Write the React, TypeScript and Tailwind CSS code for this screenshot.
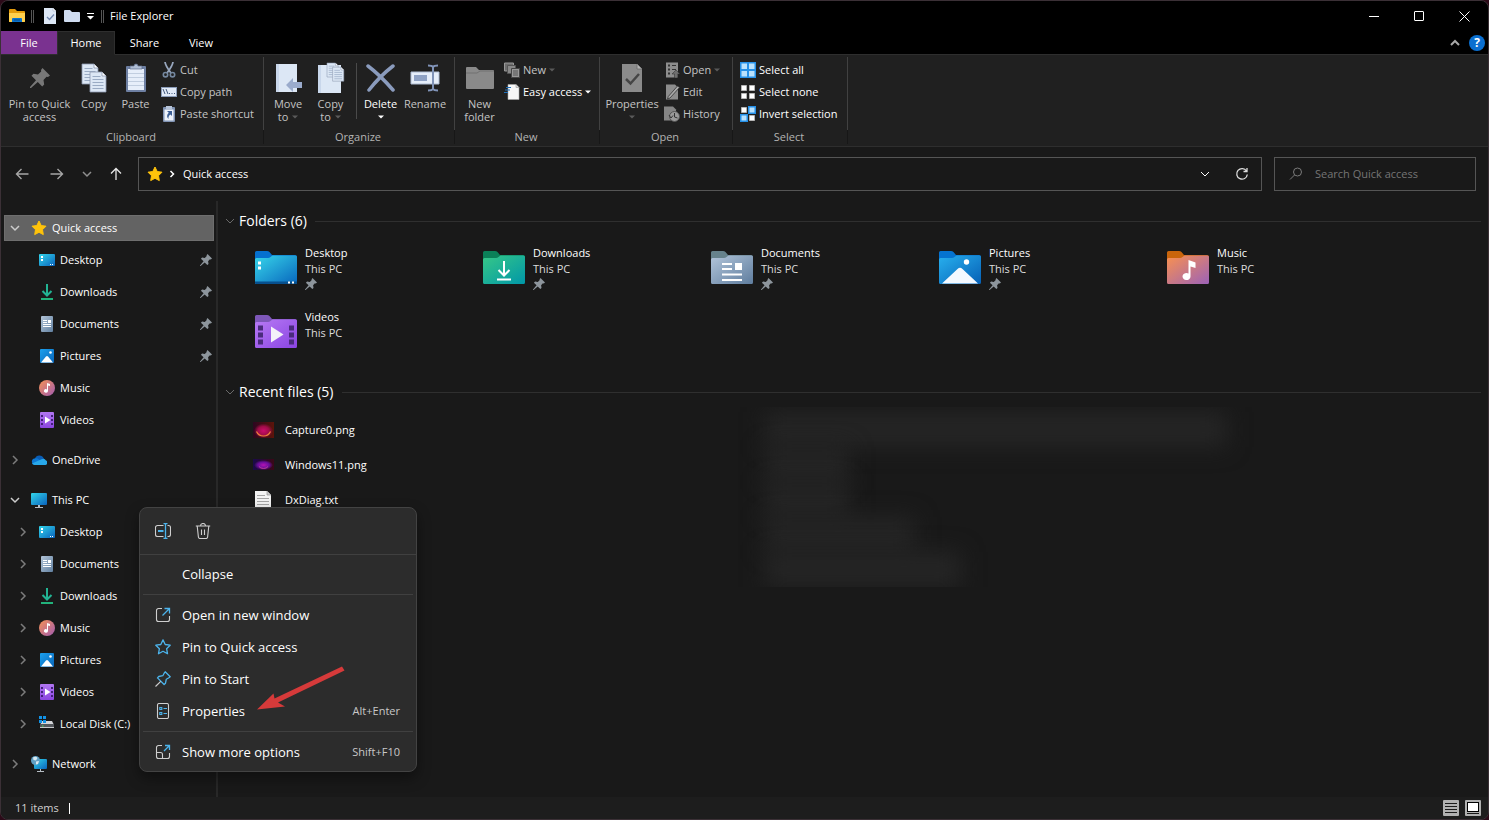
import React from 'react';

type IconProps = { className?: string };

/* ---------- small glyphs ---------- */

function Caret({ className = 'text-[#5a5a5a]' }: IconProps) {
  return (
    <svg className={`w-[6px] h-[4px] shrink-0 ${className}`} viewBox="0 0 6 4" fill="currentColor">
      <path d="M0 .5h6L3 3.500z" />
    </svg>
  );
}

function Chevron({ dir, className = '' }: { dir: 'down' | 'right' | 'up'; className?: string }) {
  const d = { down: 'M2 4l4 4 4-4', right: 'M4 2l4 4-4 4', up: 'M2 8l4-4 4 4' }[dir];
  return (
    <svg className={`w-[12px] h-[12px] shrink-0 ${className}`} viewBox="0 0 12 12" fill="none" stroke="currentColor">
      <path d={d} />
    </svg>
  );
}

function PinGlyph({ className = 'w-[12px] h-[12px] text-[#8d959c]' }: IconProps) {
  return (
    <svg className={`shrink-0 ${className}`} viewBox="0 0 20 20" fill="currentColor">
      <path d="M12.500 0L20 7.500l-2 1.500-1.500-.2-3 3.200.7 4.500-2 2L7.800 14 1 20H0v-1l6-6.800L1.500 7.800l2-2 4.500.7 3.200-3L11 2z" />
    </svg>
  );
}

function Star({ className = 'w-[16px] h-[16px]' }: IconProps) {
  return (
    <svg className={`shrink-0 ${className}`} viewBox="0 0 16 16">
      <path d="M8 1l2.200 4.500 4.800.7-3.500 3.500.8 4.900L8 12.300l-4.300 2.300.8-4.900L1 6.200l4.800-.7z" fill="#ffc30b" stroke="#ffc30b" strokeLinejoin="round" />
    </svg>
  );
}

/* ---------- tree icons (16px) ---------- */

function SmallIcon({ name }: { name: string }) {
  const cls = 'w-[16px] h-[16px] shrink-0';
  switch (name) {
    case 'star':
      return <Star />;
    case 'desktop':
      return (
        <svg className={cls} viewBox="0 0 16 16">
          <defs>
            <linearGradient id="sDesk" x1="0" y1="0" x2="1" y2="1">
              <stop offset="0" stopColor="#32d5ea" />
              <stop offset="1" stopColor="#0a63bd" />
            </linearGradient>
          </defs>
          <rect y="2" width="16" height="12" rx="1" fill="url(#sDesk)" />
          <path d="M2 4h2v2H2zM2 7h2v2H2zM11 12h1v1h-1zM13 12h1v1h-1z" fill="#fff" />
        </svg>
      );
    case 'downloads':
      return (
        <svg className={cls} viewBox="0 0 16 16" fill="none" strokeWidth="2">
          <path d="M8 0v11M3.500 7L8 11.500 12.500 7" stroke="#22b393" />
          <path d="M2 15h12" stroke="#22b27b" />
        </svg>
      );
    case 'documents':
      return (
        <svg className={cls} viewBox="0 0 16 16">
          <defs>
            <linearGradient id="sDoc" x1="0" y1="0" x2="1" y2="1">
              <stop offset="0" stopColor="#b3c5d8" />
              <stop offset="1" stopColor="#6180a0" />
            </linearGradient>
          </defs>
          <rect x="2" width="12" height="16" rx="1" fill="url(#sDoc)" />
          <path d="M4 4h4v1H4zM4 6h4v1H4zM9 4h3v3H9zM4 8h8v1H4zM4 10h8v1H4z" fill="#fff" />
        </svg>
      );
    case 'pictures':
      return (
        <svg className={cls} viewBox="0 0 16 16">
          <defs>
            <linearGradient id="sPic" x1="0" y1="0" x2="1" y2="1">
              <stop offset="0" stopColor="#1ba0ee" />
              <stop offset="1" stopColor="#0865b9" />
            </linearGradient>
          </defs>
          <rect x="1" y="1" width="14" height="14" rx="1" fill="url(#sPic)" />
          <path d="M2 14.500L7 8.500q1-1 2 0l5 6z" fill="#fff" />
          <circle cx="11.500" cy="4.500" r="1.300" fill="#fff" />
        </svg>
      );
    case 'music':
      return (
        <svg className={cls} viewBox="0 0 16 16">
          <defs>
            <linearGradient id="sMus" x1="0" y1="0" x2="1" y2="1">
              <stop offset="0" stopColor="#f69254" />
              <stop offset="1" stopColor="#a15bb0" />
            </linearGradient>
          </defs>
          <circle cx="8" cy="8" r="8" fill="url(#sMus)" />
          <path d="M8 3l3 1v2L9 5.500V11a2 1.800 0 1 1-1-1.600z" fill="#fff" />
        </svg>
      );
    case 'videos':
      return (
        <svg className={cls} viewBox="0 0 16 16">
          <defs>
            <linearGradient id="sVid" x1="0" y1="0" x2="0" y2="1">
              <stop offset="0" stopColor="#b176f2" />
              <stop offset="1" stopColor="#8b45e0" />
            </linearGradient>
          </defs>
          <rect x="1" width="14" height="16" rx="1" fill="url(#sVid)" />
          <path d="M2 3h2v2H2zM2 7h2v2H2zM2 11h2v2H2zM12 3h2v2h-2zM12 7h2v2h-2zM12 11h2v2h-2z" fill="#43217a" />
          <path d="M6 4.500v7L11.500 8z" fill="#fff" />
        </svg>
      );
    case 'onedrive':
      return (
        <svg className={cls} viewBox="0 0 16 16">
          <path d="M4 6.500a4.600 4.600 0 0 1 8.600-.2L15 10 2 11z" fill="#0a5db5" />
          <path d="M3.500 6.500q2.500-.8 4.500.9L13 11l-9.500 1.800A3.200 3.200 0 0 1 3.500 6.500z" fill="#0d78d4" />
          <path d="M10.500 7.200a3.400 3.400 0 0 1 4.500 1.400 2.300 2.300 0 0 1-1.200 4.400H3.500a3 3 0 0 1-2.500-1.500z" fill="#28a8ea" />
        </svg>
      );
    case 'pc':
      return (
        <svg className={cls} viewBox="0 0 16 16">
          <rect y="1" width="16" height="12" rx="1" fill="url(#sDesk)" />
          <path d="M7 13h2v2h3v1H4v-1h3z" fill="#b6bdc4" />
        </svg>
      );
    case 'disk':
      return (
        <svg className={cls} viewBox="0 0 16 16">
          <path d="M3 5h10l2 4H1z" fill="#d3d5d8" />
          <path d="M0 0h3v3H0zM4 0h3v3H4zM0 4h3v3H0zM4 4h3v3H4z" fill="#1192e6" />
          <rect x="1" y="8" width="14" height="4" fill="#55585c" />
          <path d="M1 11h14v1H1z" fill="#c8cacc" />
          <path d="M3 9.500h1.500V10.500H3z" fill="#4cd964" />
        </svg>
      );
    case 'network':
      return (
        <svg className={cls} viewBox="0 0 16 16">
          <rect x="3" y="3" width="13" height="10" rx="1" fill="url(#sDesk)" />
          <path d="M9 13h1v2h3v1H6v-1h3z" fill="#b6bdc4" />
          <circle cx="4.500" cy="4.500" r="4.500" fill="#5f9fc4" />
          <path d="M2 1.500Q5 0 6.500 2L5 4.500 2.500 4zM5 5.500l3-.5-1 3-2 .5z" fill="#d7eaf3" />
        </svg>
      );
    default:
      return null;
  }
}

/* ---------- 42px library folders ---------- */

const folderColors: Record<string, [string, string, string]> = {
  desktop: ['#0570cf', '#38d6ea', '#0866bd'],
  downloads: ['#0b8058', '#37c887', '#0097a8'],
  documents: ['#66828c', '#b2c5da', '#5f7d9e'],
  pictures: ['#0573d0', '#28b0ee', '#0660b6'],
  music: ['#c9650c', '#f9914f', '#9c62b8'],
  videos: ['#7d57b8', '#b77af4', '#8a44e2'],
};

function FolderIcon({ name }: { name: string }) {
  const [back, from, to] = folderColors[name];
  const id = `folder-${name}`;
  return (
    <svg className="w-[42px] h-[34px] shrink-0" viewBox="0 0 42 34">
      <defs>
        <linearGradient id={id} x1="0" y1="0" x2="1" y2="1">
          <stop offset="0" stopColor={from} />
          <stop offset="1" stopColor={to} />
        </linearGradient>
      </defs>
      <path d="M0 1.500Q0 0 1.500 0H12q1.500 0 2.500 1L17 4H40q2 0 2 2V15H0z" fill={back} />
      <path d="M0 8.500q0-1.500 1.500-1.500H13q1.500 0 2.500-1l2-1.500H40.500q1.500 0 1.500 1.500v25.500q0 1.500-1.500 1.500h-39Q0 33 0 31.500z" fill={`url(#${id})`} />
      {name === 'desktop' && (
        <>
          <path d="M0 30.500h42V31.500q0 1.500-1.500 1.500h-39Q0 33 0 31.500z" fill="#07508e" />
          <path d="M3 10.500h3v3H3zM3 15.500h3v3H3zM33 30.500h2V32.500h-2zM37 30.500h2V32.500h-2z" fill="#fff" />
        </>
      )}
      {name === 'downloads' && (
        <path d="M21 10v14M15.500 19l5.500 5.500 5.500-5.500M14 28.500h14" stroke="#fff" strokeWidth="2" fill="none" />
      )}
      {name === 'documents' && (
        <path d="M11 12h10v2H11zM11 17h10v2H11zM24 12h7v7h-7zM11 22.500h20v2H11zM11 28h20v2H11z" fill="#fff" />
      )}
      {name === 'pictures' && (
        <>
          <path d="M3 32.500L18.500 18q2.500-2.500 5 0L39 32.500z" fill="#f4f9ff" />
          <circle cx="27.500" cy="11" r="2.700" fill="#fff" />
        </>
      )}
      {name === 'music' && (
        <path d="M21.500 9l7 2.500v5.500l-5-1.500V25.500a4 3.500 0 1 1-2-3z" fill="#fff" />
      )}
      {name === 'videos' && (
        <>
          <path d="M3 10.500h5v5H3zM3 17.500h5v5H3zM3 24.500h5v5H3zM34 10.500h5v5h-5zM34 17.500h5v5h-5zM34 24.500h5v5h-5z" fill="#4a2b7c" />
          <path d="M16 11.500v16L28.500 19.500z" fill="#f4f1f9" />
        </>
      )}
    </svg>
  );
}

/* ---------- ribbon icons ---------- */

const pale = '#dce7f5';
const slate = '#8a9bbd';

function PageShape({ x, y, line = '#9aabc4' }: { x: number; y: number; line?: string }) {
  return (
    <g transform={`translate(${x} ${y})`}>
      <path d="M0 0h12l4 4v16H0z" fill={pale} stroke="#8d9bb0" strokeWidth=".8" />
      <path d="M12 0v4h4" fill="#fff" stroke="#8d9bb0" strokeWidth=".8" />
      <path d="M2.500 4.500h8M2.500 7.500h11M2.500 10.500h11M2.500 13.500h11M2.500 16.500h11" stroke={line} />
    </g>
  );
}

function LargeIcon({ name }: { name: string }) {
  switch (name) {
    case 'pin':
      return <PinGlyph className="w-[20px] h-[20px] text-[#777777]" />;
    case 'copy':
      return (
        <svg width="26" height="30" viewBox="0 0 26 30">
          <PageShape x={1} y={1} />
          <PageShape x={9} y={9} />
        </svg>
      );
    case 'paste':
      return (
        <svg width="22" height="30" viewBox="0 0 22 30">
          <rect x="1" y="3" width="20" height="26" rx="1" fill="#6e80a3" />
          <path d="M3 6h16v21H3z" fill="#e6eefa" />
          <path d="M3 10.500h16M3 14.500h16M3 18.500h16M3 22.500h16" stroke="#c1cee0" />
          <path d="M5 3h4a2 2 0 0 1 4 0h4v3H5z" fill="#aebcd3" stroke="#5c6c8b" strokeWidth=".7" />
        </svg>
      );
    case 'move':
      return (
        <svg width="28" height="30" viewBox="0 0 28 30">
          <path d="M2 1h21v28H2z" fill={pale} />
          <path d="M2 1h3v28H2z" fill="#c9d7eb" />
          <path d="M12 22l7-7v4h9v6h-9v4z" fill="#9aabcc" />
        </svg>
      );
    case 'copyto':
      return (
        <svg width="28" height="32" viewBox="0 0 28 32">
          <path d="M1 3h23v28H1z" fill={pale} />
          <path d="M1 3h3v28H1z" fill="#c9d7eb" />
          <g transform="translate(10 1) scale(.7)">
            <PageShape x={0} y={0} />
            <PageShape x={8} y={6} />
          </g>
        </svg>
      );
    case 'delete':
      return (
        <svg width="30" height="30" viewBox="0 0 30 30" fill="none">
          <path d="M2 3Q14 12 27 27M27 3Q14 13 3 27" stroke={slate} strokeWidth="3.500" strokeLinecap="round" />
        </svg>
      );
    case 'rename':
      return (
        <svg width="30" height="28" viewBox="0 0 30 28">
          <path d="M1 8h28v12H1z" fill="#e6eefa" stroke="#aebcd3" />
          <path d="M4 11h13v6H4z" fill="#8fa2c5" />
          <path d="M18 1.500q4 0 5 1.500 1-1.500 5-1.500M18 26.500q4 0 5-1.500 1 1.500 5 1.500M23 3v22" stroke="#8093b8" strokeWidth="2" fill="none" />
        </svg>
      );
    case 'newfolder':
      return (
        <svg width="30" height="24" viewBox="0 0 30 24">
          <path d="M1 2q0-1 1-1h9l3 3h14q1 0 1 1v17q0 1-1 1H2q-1 0-1-1z" fill="#8a8a8a" />
          <path d="M1 7h11l3-2h14" stroke="#6b6b6b" fill="none" strokeWidth=".8" />
        </svg>
      );
    case 'properties':
      return (
        <svg width="22" height="30" viewBox="0 0 22 30">
          <path d="M1 1h15l5 5v23H1z" fill="#8b8b8b" />
          <path d="M16 1v5h5" fill="#b3b3b3" stroke="#6a6a6a" strokeWidth=".8" />
          <path d="M5 16l4.500 4.500L18 11" stroke="#454545" strokeWidth="2.500" fill="none" />
        </svg>
      );
    default:
      return null;
  }
}

function RibbonSmallIcon({ name }: { name: string }) {
  const cls = 'w-[16px] h-[16px] shrink-0';
  switch (name) {
    case 'cut':
      return (
        <svg className={cls} viewBox="0 0 16 16" fill="none">
          <path d="M4 0q.5 4 6 11M12 0q-.5 4-6 11" stroke="#97a6bd" strokeWidth="1.800" />
          <circle cx="4.500" cy="12.700" r="2.200" stroke="#75889f" strokeWidth="1.600" />
          <circle cx="11.500" cy="12.700" r="2.200" stroke="#75889f" strokeWidth="1.600" />
        </svg>
      );
    case 'copypath':
      return (
        <svg className={cls} viewBox="0 0 16 16">
          <rect x=".5" y="3.500" width="15" height="9" fill="#e1eaf7" stroke="#8c9dba" />
          <path d="M2 5l2 5M5 5l2 5" stroke="#44587a" fill="none" />
          <path d="M8 9h1v1H8zM10.500 9h1v1h-1zM13 9h1v1h-1z" fill="#44587a" />
        </svg>
      );
    case 'pasteshortcut':
      return (
        <svg className={cls} viewBox="0 0 16 16">
          <rect x="2" y="1" width="12" height="15" rx="1" fill="#8093b3" />
          <path d="M3.500 3.500h9v11h-9z" fill="#eef3fb" />
          <path d="M5 0h6v3H5z" fill="#b6c3d8" />
          <path d="M6 5h5v5L9.500 8.500Q7 10 7.500 13 4.500 10 7.800 6.800z" fill="#3e5f94" />
        </svg>
      );
    case 'new':
      return (
        <svg className={cls} viewBox="0 0 16 16">
          <path d="M.5 1h9v8h-9z" fill="#6d6d6d" stroke="#999" />
          <path d="M3.500 3.500h8v8h-8z" fill="#888" stroke="#555" />
          <path d="M7.500 6.500h8v9h-8z" fill="#999" stroke="#444" />
          <path d="M9 9h5M9 11h5M9 13h5" stroke="#555" />
        </svg>
      );
    case 'easyaccess':
      return (
        <svg className={cls} viewBox="0 0 16 16">
          <path d="M4 .5h8l3 3v12H4z" fill="#f7f7f7" stroke="#aaa" strokeWidth=".6" />
          <path d="M12 .5v3h3" fill="#ddd" stroke="#999" strokeWidth=".6" />
          <path d="M2 3.500h5M1 6h5M0 8.500h4" stroke="#1f6fb8" />
        </svg>
      );
    case 'open':
      return (
        <svg className={cls} viewBox="0 0 16 16">
          <path d="M2 .5h12v15H2z" fill="#8d8d8d" />
          <path d="M4 2.500h2v2H4zM4 6.500h2v2H4zM4 10.500h2v2H4z" fill="#333" />
          <path d="M8 3.500h4M8 7.500h4" stroke="#333" />
          <path d="M12 8l4 4h-2.500v4h-3v-4H8z" fill="#6f6f6f" stroke="#2b2b2b" strokeWidth=".5" />
        </svg>
      );
    case 'edit':
      return (
        <svg className={cls} viewBox="0 0 16 16">
          <path d="M2 .5h9l3 3v12H2z" fill="#8d8d8d" />
          <path d="M15.500 3.500L6 14l-2.500 1 .8-2.500L13.500 2z" fill="#aaa" stroke="#333" strokeWidth=".8" />
        </svg>
      );
    case 'history':
      return (
        <svg className={cls} viewBox="0 0 16 16">
          <path d="M0 .5h9l3 3v11H0z" fill="#858585" />
          <circle cx="10.500" cy="10.500" r="5" fill="#9a9a9a" stroke="#555" />
          <path d="M10.500 7v4l3 1M5 9l2 3 2-2.500" stroke="#333" fill="none" />
        </svg>
      );
    case 'selectall':
      return (
        <svg className={cls} viewBox="0 0 16 16">
          <path d="M0 0h16v16H0z" fill="#2590e8" />
          <path d="M1.500 1.500h5.500v5.500H1.500zM9 1.500h5.500v5.500H9zM1.500 9h5.500v5.500H1.500zM9 9h5.500v5.500H9z" fill="#b9e1fd" />
        </svg>
      );
    case 'selectnone':
      return (
        <svg className={cls} viewBox="0 0 16 16">
          <path d="M1.500 1.500h5v5h-5zM9.500 1.500h5v5h-5zM1.500 9.500h5v5h-5zM9.500 9.500h5v5h-5z" fill="#fff" stroke="#b5b5b5" />
        </svg>
      );
    case 'invert':
      return (
        <svg className={cls} viewBox="0 0 16 16">
          <path d="M1.500 1.500h5v5h-5zM9.500 9.500h5v5h-5z" fill="#fff" stroke="#b5b5b5" />
          <path d="M8 0h8v8H8zM0 8h8v8H0z" fill="#2590e8" />
          <path d="M9.500 1.500h5v5h-5zM1.500 9.500h5v5h-5z" fill="#b9e1fd" />
        </svg>
      );
    default:
      return null;
  }
}

/* ---------- ribbon pieces ---------- */

type LargeProps = {
  icon: string;
  lines: string[];
  width: string;
  active?: boolean;
  caret?: 'inline' | 'below';
};

function LargeButton({ icon, lines, width, active, caret }: LargeProps) {
  return (
    <button
      type="button"
      className={`flex flex-col items-center shrink-0 leading-[13px] whitespace-nowrap ${width} ${active ? 'text-white' : 'text-[#c4c4c4]'}`}
    >
      <span className="h-[38px] flex items-center justify-center">
        <LargeIcon name={icon} />
      </span>
      {lines.map((line, i) => (
        <span key={line} className="flex items-center gap-1">
          {line}
          {caret === 'inline' && i === lines.length - 1 && <Caret />}
        </span>
      ))}
      {caret === 'below' && (
        <span className="h-[13px] flex items-center">
          <Caret className={active ? 'text-white' : 'text-[#5a5a5a]'} />
        </span>
      )}
    </button>
  );
}

type SmallProps = { icon: string; label: string; active?: boolean; caret?: boolean };

function SmallButton({ icon, label, active, caret }: SmallProps) {
  return (
    <button
      type="button"
      className={`h-[22px] flex items-center gap-[3px] whitespace-nowrap ${active ? 'text-white' : 'text-[#c4c4c4]'}`}
    >
      <RibbonSmallIcon name={icon} />
      {label}
      {caret && <Caret className={active ? 'text-white' : 'text-[#5a5a5a]'} />}
    </button>
  );
}

function Group({ label, width, children }: { label: string; width: string; children: React.ReactNode }) {
  return (
    <section aria-label={label} className={`flex shrink-0 ${width}`}>
      <div className="flex-1 min-w-0 flex flex-col pt-1">
        <div className="h-[70px] flex">{children}</div>
        <div className="h-[16px] leading-[16px] pr-[2px] text-center text-[#b4b4b4]">{label}</div>
      </div>
      <div className="w-px my-[2px] bg-linear-to-b from-[#414141] from-84% to-[#171717] to-84%" />
    </section>
  );
}

function Ribbon() {
  return (
    <div className="flex bg-[#202020] border-b border-[#2e2e2e] h-[92px] overflow-hidden">
      <Group label="Clipboard" width="w-[263px]">
        <LargeButton icon="pin" lines={['Pin to Quick', 'access']} width="w-[77px]" />
        <LargeButton icon="copy" lines={['Copy']} width="w-[32px]" />
        <LargeButton icon="paste" lines={['Paste']} width="w-[51px]" />
        <div className="flex flex-col">
          <SmallButton icon="cut" label="Cut" />
          <SmallButton icon="copypath" label="Copy path" />
          <SmallButton icon="pasteshortcut" label="Paste shortcut" />
        </div>
      </Group>
      <Group label="Organize" width="w-[191px]">
        <LargeButton icon="move" lines={['Move', 'to']} width="w-[48px]" caret="inline" />
        <LargeButton icon="copyto" lines={['Copy', 'to']} width="w-[37px]" caret="inline" />
        <div className="w-px h-[56px] mt-1 ml-[7px] bg-[#4a4a4a]" />
        <LargeButton icon="delete" lines={['Delete']} width="w-[47px]" active caret="below" />
        <LargeButton icon="rename" lines={['Rename']} width="w-[42px]" />
      </Group>
      <Group label="New" width="w-[145px]">
        <LargeButton icon="newfolder" lines={['New', 'folder']} width="w-[49px]" />
        <div className="flex flex-col">
          <SmallButton icon="new" label="New" caret />
          <SmallButton icon="easyaccess" label="Easy access" active caret />
        </div>
      </Group>
      <Group label="Open" width="w-[133px]">
        <LargeButton icon="properties" lines={['Properties']} width="w-[64px]" caret="below" />
        <div className="flex flex-col">
          <SmallButton icon="open" label="Open" caret />
          <SmallButton icon="edit" label="Edit" />
          <SmallButton icon="history" label="History" />
        </div>
      </Group>
      <Group label="Select" width="w-[115px]">
        <div className="flex flex-col pl-[7px]">
          <SmallButton icon="selectall" label="Select all" active />
          <SmallButton icon="selectnone" label="Select none" active />
          <SmallButton icon="invert" label="Invert selection" active />
        </div>
      </Group>
    </div>
  );
}

/* ---------- title bar, tabs, address bar ---------- */

function TitleBar() {
  return (
    <header className="h-[30px] bg-black flex items-center text-white">
      <svg className="ml-[7px]" width="18" height="16" viewBox="0 0 18 16">
        <path d="M1 2q0-1 1-1h5l2 2h7q1 0 1 1v10H1z" fill="#e39b0b" />
        <path d="M1 5h16v8q0 1-1 1H2q-1 0-1-1z" fill="#ffd04d" />
        <path d="M4 14v-3q0-1 1-1h8q1 0 1 1v3z" fill="#0b73cc" />
        <path d="M6 12h6" stroke="#064a8c" />
      </svg>
      <span className="ml-[5px] w-[3px] h-[13px] border-x border-[#555555]" />
      <button type="button" aria-label="Properties" className="ml-[9px]">
        <svg width="14" height="16" viewBox="0 0 14 16">
          <path d="M1 0h9l3 3v13H1z" fill={pale} />
          <path d="M10 0v3h3" fill="#fff" stroke="#a9b6c9" strokeWidth=".6" />
          <path d="M4 9l2.500 2.500L11 6.500" stroke="#7288b0" strokeWidth="1.300" fill="none" />
        </svg>
      </button>
      <button type="button" aria-label="New folder" className="ml-[7px]">
        <svg width="16" height="14" viewBox="0 0 16 14">
          <path d="M0 2q0-1 1-1h5l2 2h7q1 0 1 1v8q0 1-1 1H1q-1 0-1-1z" fill="#cfdcf0" />
        </svg>
      </button>
      <button type="button" aria-label="Customize Quick Access Toolbar" className="ml-[6px]">
        <svg width="9" height="8" viewBox="0 0 9 8" fill="#fff">
          <path d="M1 1h7v1H1zM1 4h7L4.500 7.500z" />
        </svg>
      </button>
      <span className="ml-[6px] w-[3px] h-[13px] border-x border-[#555555]" />
      <h1 className="ml-[6px]">File Explorer</h1>
      <div className="ml-auto flex h-full">
        <button type="button" aria-label="Minimize" className="w-[45px] flex items-center justify-center">
          <svg width="10" height="10" viewBox="0 0 10 10" stroke="#fff"><path d="M0 5.500h10" /></svg>
        </button>
        <button type="button" aria-label="Maximize" className="w-[45px] flex items-center justify-center">
          <svg width="10" height="10" viewBox="0 0 10 10" stroke="#fff" fill="none"><rect x=".5" y=".5" width="9" height="9" rx=".5" /></svg>
        </button>
        <button type="button" aria-label="Close" className="w-[47px] flex items-center justify-center">
          <svg width="11" height="11" viewBox="0 0 11 11" stroke="#fff"><path d="M.5.5l10 10M10.500.5l-10 10" /></svg>
        </button>
      </div>
    </header>
  );
}

function Tabs() {
  return (
    <nav className="h-[24px] bg-black flex text-white">
      <button type="button" className="w-[56px] bg-[#7a3290] border-b border-[#2e2e2e]">File</button>
      <button type="button" className="w-[58px] bg-[#202020] border border-[#2e2e2e] border-b-[#202020]">Home</button>
      <button type="button" className="w-[59px] border-b border-[#2e2e2e]">Share</button>
      <button type="button" className="w-[54px] border-b border-[#2e2e2e]">View</button>
      <div className="flex-1 flex items-center justify-end gap-2 pr-[3px] border-b border-[#2e2e2e]">
        <button type="button" aria-label="Minimize the Ribbon">
          <Chevron dir="up" className="stroke-2 text-[#a8a8a8]" />
        </button>
        <button type="button" className="w-[16px] h-[16px] leading-[16px] rounded-full bg-[#0a6fd0] font-bold text-xs">?</button>
      </div>
    </nav>
  );
}

function AddressRow() {
  return (
    <div className="h-[54px] flex items-center pl-[14px] pr-3">
      <button type="button" aria-label="Back" className="text-[#a6a6a6]">
        <svg width="14" height="12" viewBox="0 0 14 12" fill="none" stroke="currentColor" strokeWidth="1.400"><path d="M13.500 6H1.500M6.500 1l-5 5 5 5" /></svg>
      </button>
      <button type="button" aria-label="Forward" className="ml-[21px] text-[#a6a6a6]">
        <svg width="14" height="12" viewBox="0 0 14 12" fill="none" stroke="currentColor" strokeWidth="1.400"><path d="M.5 6h12M7.500 1l5 5-5 5" /></svg>
      </button>
      <button type="button" aria-label="Recent locations" className="ml-[17px] text-[#8f8f8f]">
        <Chevron dir="down" className="stroke-[1.500]" />
      </button>
      <button type="button" aria-label="Up" className="ml-[17px] text-[#e6e6e6]">
        <svg width="12" height="14" viewBox="0 0 12 14" fill="none" stroke="currentColor" strokeWidth="1.300"><path d="M6 13V1.500M1 6.500l5-5 5 5" /></svg>
      </button>
      <div className="ml-4 flex-1 h-[34px] border border-[#555555] flex items-center pl-2 pr-3 text-white">
        <Star />
        <svg className="ml-[6px] mr-2" width="6" height="8" viewBox="0 0 6 8" fill="none" stroke="currentColor" strokeWidth="1.500">
          <path d="M1.500 1l3 3-3 3" />
        </svg>
        <button type="button">Quick access</button>
        <button type="button" aria-label="Previous locations" className="ml-auto">
          <Chevron dir="down" />
        </button>
        <button type="button" aria-label="Refresh" className="ml-6">
          <svg width="14" height="14" viewBox="0 0 14 14" fill="none" stroke="#dddddd" strokeWidth="1.300">
            <path d="M11.500 4A5.300 5.300 0 1 0 12.300 7.500M12 1v3.500H8.500" />
          </svg>
        </button>
      </div>
      <label className="ml-3 w-[202px] h-[34px] border border-[#555555] flex items-center pl-[14px] gap-3">
        <svg className="shrink-0" width="14" height="14" viewBox="0 0 14 14" fill="none" stroke="#7a7a7a">
          <circle cx="8.500" cy="5" r="4" />
          <path d="M5.500 8L1 12.500" />
        </svg>
        <input
          type="text"
          aria-label="Search Quick access"
          placeholder="Search Quick access"
          className="w-full bg-transparent outline-none text-white placeholder:text-[#757575]"
        />
      </label>
    </div>
  );
}

/* ---------- navigation tree ---------- */

type TreeItem = {
  label: string;
  icon: string;
  level: 0 | 1;
  chevron?: 'down' | 'right';
  pinned?: boolean;
  selected?: boolean;
};

const tree: TreeItem[][] = [
  [
    { label: 'Quick access', icon: 'star', level: 0, chevron: 'down', selected: true },
    { label: 'Desktop', icon: 'desktop', level: 1, pinned: true },
    { label: 'Downloads', icon: 'downloads', level: 1, pinned: true },
    { label: 'Documents', icon: 'documents', level: 1, pinned: true },
    { label: 'Pictures', icon: 'pictures', level: 1, pinned: true },
    { label: 'Music', icon: 'music', level: 1 },
    { label: 'Videos', icon: 'videos', level: 1 },
  ],
  [{ label: 'OneDrive', icon: 'onedrive', level: 0, chevron: 'right' }],
  [
    { label: 'This PC', icon: 'pc', level: 0, chevron: 'down' },
    { label: 'Desktop', icon: 'desktop', level: 1, chevron: 'right' },
    { label: 'Documents', icon: 'documents', level: 1, chevron: 'right' },
    { label: 'Downloads', icon: 'downloads', level: 1, chevron: 'right' },
    { label: 'Music', icon: 'music', level: 1, chevron: 'right' },
    { label: 'Pictures', icon: 'pictures', level: 1, chevron: 'right' },
    { label: 'Videos', icon: 'videos', level: 1, chevron: 'right' },
    { label: 'Local Disk (C:)', icon: 'disk', level: 1, chevron: 'right' },
  ],
  [{ label: 'Network', icon: 'network', level: 0, chevron: 'right' }],
];

function NavTree() {
  return (
    <aside className="w-[217px] shrink-0 border-r-2 border-[#282828] pt-[11px] pb-4 pl-[3px] pr-[2px] flex flex-col gap-2 text-white">
      {tree.map((section) => (
        <ul key={section[0].label}>
          {section.map((item) => (
            <li key={item.label} className="h-[32px] flex items-center">
              <button
                type="button"
                className={`w-full h-[26px] flex items-center pr-[2px] whitespace-nowrap ${item.level === 0 ? 'pl-[5px]' : 'pl-[13px]'} ${item.selected ? 'bg-[#636363] outline outline-[#6e6e6e] -outline-offset-1' : ''}`}
              >
                <span className={`w-[12px] mr-[10px] ${item.chevron === 'down' ? 'text-[#cccccc]' : 'text-[#7c7c7c]'}`}>
                  {item.chevron && <Chevron dir={item.chevron} className="stroke-[1.500]" />}
                </span>
                <SmallIcon name={item.icon} />
                <span className="ml-[5px]">{item.label}</span>
                {item.pinned && <PinGlyph className="ml-auto w-[12px] h-[12px] text-[#8d959c]" />}
              </button>
            </li>
          ))}
        </ul>
      ))}
    </aside>
  );
}

/* ---------- content ---------- */

const folders = [
  { label: 'Desktop', icon: 'desktop', pinned: true },
  { label: 'Downloads', icon: 'downloads', pinned: true },
  { label: 'Documents', icon: 'documents', pinned: true },
  { label: 'Pictures', icon: 'pictures', pinned: true },
  { label: 'Music', icon: 'music' },
  { label: 'Videos', icon: 'videos' },
];

const files = [
  { label: 'Capture0.png', kind: 'warm', trace: 'w-[462px]' },
  { label: 'Windows11.png', kind: 'cool', trace: 'w-[84px]' },
  { label: 'DxDiag.txt', kind: 'text', trace: 'w-[84px]' },
  { label: '', kind: '', trace: 'w-[150px]' },
  { label: '', kind: '', trace: 'w-[196px]' },
];

function FileThumb({ kind }: { kind: string }) {
  if (kind === 'text') {
    return (
      <svg width="18" height="20" viewBox="0 0 18 20">
        <path d="M1 1h12l4 4v15H1z" fill="#f3f3f3" />
        <path d="M13 1v4h4" fill="#ccc" stroke="#888" strokeWidth=".6" />
        <path d="M3 5.500h8M3 8.500h12M3 11.500h12M3 14.500h12M3 17.500h12" stroke="#a5a5a5" />
      </svg>
    );
  }
  const warm = kind === 'warm';
  const h = warm ? 16 : 11;
  return (
    <svg width="21" height={h} viewBox={`0 0 21 ${h}`}>
      <defs>
        <linearGradient id={`base-${kind}`}>
          <stop offset="0" stopColor={warm ? '#2c0620' : '#1a0a4a'} />
          <stop offset="1" stopColor={warm ? '#5c140a' : '#3a0816'} />
        </linearGradient>
        <radialGradient id={`glow-${kind}`} cx=".5" cy=".55" r=".45">
          <stop offset="0" stopColor={warm ? '#cc0c6c' : '#b414b4'} />
          <stop offset=".6" stopColor={warm ? '#a00c48' : '#6a0e9c'} />
          <stop offset="1" stopColor={warm ? '#a00c48' : '#6a0e9c'} stopOpacity="0" />
        </radialGradient>
      </defs>
      <rect width="21" height={h} fill={`url(#base-${kind})`} />
      <rect width="21" height={h} fill={`url(#glow-${kind})`} />
      {warm ? (
        <path d="M3.500 9.500q2 4.500 7 4.500t7-4.500" fill="none" stroke="#f0803c" strokeWidth="1.200" />
      ) : (
        <path d="M6 7.500q1.500 2 4.500 2t4.500-2" fill="none" stroke="#d0489a" strokeWidth=".8" />
      )}
    </svg>
  );
}

function SectionHeading({ title }: { title: string }) {
  return (
    <h2 className="h-[20px] flex items-center text-sm text-white pl-[6px] pr-[7px] whitespace-nowrap">
      <Chevron dir="down" className="mr-[3px] text-[#6a6a6a]" />
      {title}
      <span className="ml-2 flex-1 h-px bg-[#2f2f2f]" />
    </h2>
  );
}

function Content() {
  return (
    <main className="flex-1 min-w-0 pt-[10px] text-white">
      <SectionHeading title="Folders (6)" />
      <ul className="mt-[14px] pl-[37px] grid grid-cols-[repeat(auto-fill,228px)]">
        {folders.map((f) => (
          <li key={f.label} className="h-[64px] flex">
            <div className="mt-[6px]"><FolderIcon name={f.icon} /></div>
            <div className="ml-2 leading-[16px]">
              <div>{f.label}</div>
              <div className="text-[#dddddd]">This PC</div>
              {f.pinned && <PinGlyph className="mt-px w-[12px] h-[12px] text-[#8d959c]" />}
            </div>
          </li>
        ))}
      </ul>
      <div className="mt-[9px]">
        <SectionHeading title="Recent files (5)" />
      </div>
      {/* the paths beside the files are obscured */}
      <ul className="mt-[5px] pt-[5px] pl-[34px] overflow-hidden">
        {files.map((f, i) => (
          <li key={i} className="h-[35px] flex items-center">
            <span className="w-[22px] flex justify-center">{f.kind && <FileThumb kind={f.kind} />}</span>
            <span className="ml-[11px] w-[480px]">{f.label}</span>
            <span className={`h-[35px] bg-[#252525] blur-[11px] ${f.trace}`} />
          </li>
        ))}
      </ul>
    </main>
  );
}

/* ---------- context menu ---------- */

const blue = '#4cb4ec';

function MenuIcon({ name }: { name: string }) {
  return (
    <svg className="w-[16px] h-[16px] shrink-0" viewBox="0 0 16 16" fill="none" stroke="#cfcfcf" strokeWidth="1.100">
      {name === 'rename' && (
        <>
          <path d="M8.500 2.500h-6a2 2 0 0 0-2 2v7a2 2 0 0 0 2 2h6M12.500 2.500h1a2 2 0 0 1 2 2v7a2 2 0 0 1-2 2h-1" />
          <path d="M8.500.5h4M8.500 15.500h4M10.500.5v15" stroke={blue} strokeWidth="1.300" />
          <path d="M3 8h5.500" stroke={blue} strokeWidth="2" />
        </>
      )}
      {name === 'delete' && (
        <path d="M.8 3h14.400M5.500 3a2.500 2.500 0 0 1 5 0M2.200 3l1.200 11q.1 1.500 1.600 1.500h6q1.500 0 1.600-1.500L13.800 3M6.500 6.500v5.500M9.500 6.500v5.500" />
      )}
      {name === 'open' && (
        <>
          <path d="M7 1.500H3.500a2 2 0 0 0-2 2v9a2 2 0 0 0 2 2h9a2 2 0 0 0 2-2V9" />
          <path d="M9.500 1.500h5v5M14.500 1.500L7.500 8.500" stroke={blue} strokeWidth="1.300" />
        </>
      )}
      {name === 'star' && (
        <path d="M8 .9l2.200 4.600 5 .7-3.600 3.500.9 5L8 12.300l-4.500 2.400.9-5L.8 6.200l5-.7z" stroke={blue} strokeWidth="1.300" strokeLinejoin="round" />
      )}
      {name === 'pin' && (
        <>
          <path d="M10.200.8l5 5-1.300.9-2.600 1.500-.8 4-1.400 1.300-6.600-6.600 1.300-1.400 4-.8L9.300 2z" stroke={blue} strokeWidth="1.300" strokeLinejoin="round" />
          <path d="M5.700 10.300L.5 15.500" />
        </>
      )}
      {name === 'properties' && (
        <>
          <rect x="2.500" y=".5" width="11" height="15" rx="1.500" />
          <path d="M4.800 4.500h2v2h-2zM4.800 9.500h2v2h-2zM8.500 5.500H12M8.500 10.500H12" stroke={blue} />
        </>
      )}
      {name === 'more' && (
        <>
          <path d="M7 1.500H3.500a2 2 0 0 0-2 2v9a2 2 0 0 0 2 2h9a2 2 0 0 0 2-2V9M1.500 8.500h4a2 2 0 0 1 2 2v4" />
          <path d="M10 1.500h4.500V6M14.500 1.500L9 7" stroke={blue} strokeWidth="1.300" />
        </>
      )}
    </svg>
  );
}

function MenuItem({ icon, label, shortcut }: { icon: string; label: string; shortcut?: string }) {
  return (
    <button type="button" role="menuitem" className="w-full h-[32px] flex items-center pl-[15px] pr-4">
      <MenuIcon name={icon} />
      <span className="ml-[11px]">{label}</span>
      {shortcut && <span className="ml-auto text-[11px] text-[#c8c8c8]">{shortcut}</span>}
    </button>
  );
}

function ContextMenu() {
  return (
    <div
      role="menu"
      className="absolute left-[138px] top-[506px] w-[278px] rounded-lg border border-[#434343] bg-[#2c2c2c] text-[13px] text-white shadow-[0_6px_14px_rgba(0,0,0,0.4)]"
    >
      <div className="h-[47px] flex items-center gap-6 pl-[15px] border-b border-[#404040]">
        <button type="button" aria-label="Rename"><MenuIcon name="rename" /></button>
        <button type="button" aria-label="Delete"><MenuIcon name="delete" /></button>
      </div>
      <button type="button" role="menuitem" className="w-full h-[39px] pl-[42px] pb-[2px] text-left">Collapse</button>
      <div className="mx-[3px] border-y border-[#404040] py-1">
        <div className="-mx-[3px]">
          <MenuItem icon="open" label="Open in new window" />
          <MenuItem icon="star" label="Pin to Quick access" />
          <MenuItem icon="pin" label="Pin to Start" />
          <MenuItem icon="properties" label="Properties" shortcut="Alt+Enter" />
        </div>
      </div>
      <div className="pt-1 pb-[3px]">
        <MenuItem icon="more" label="Show more options" shortcut="Shift+F10" />
      </div>
      {/* red pointer at the Properties entry */}
      <svg className="absolute left-[115px] top-[156px] pointer-events-none" width="90" height="48" viewBox="0 0 90 48">
        <path d="M87 2.500L89.500 6.500 23 38.500l7 4L2 45.500 18.500 29.500l1 5z" fill="#d63a3a" />
      </svg>
    </div>
  );
}

function StatusBar() {
  return (
    <footer className="h-[22px] bg-[#1d1d1d] flex items-center pl-[14px] pr-[7px] text-[#d0d0d0]">
      11 items
      <span className="ml-[10px] w-px h-[11px] bg-white" />
      <div className="ml-auto flex gap-[6px]">
        <button type="button" aria-label="Details view">
          <svg width="16" height="16" viewBox="0 0 16 16">
            <rect width="16" height="16" rx="1" fill="#b0b0b0" />
            <path d="M2 3.500h12M2 6.500h12M2 9.500h12M2 12.500h12" stroke="#1a1a1a" />
          </svg>
        </button>
        <button type="button" aria-label="Large icons view">
          <svg width="16" height="16" viewBox="0 0 16 16">
            <rect width="16" height="16" rx="1" fill="#b0b0b0" />
            <rect x="2.500" y="2.500" width="11" height="9" fill="#fff" stroke="#000" />
            <path d="M2 13.500h12" stroke="#1a1a1a" />
          </svg>
        </button>
      </div>
    </footer>
  );
}

export default function App() {
  return (
    <div className="min-h-screen flex bg-[#2c0a18] font-['Open_Sans','Noto_Sans',sans-serif] text-[11px] leading-[16px]">
      <div className="relative flex-1 min-w-0 flex flex-col rounded-lg overflow-hidden border border-[#3b3036] bg-[#191919]">
        <TitleBar />
        <Tabs />
        <Ribbon />
        <AddressRow />
        <div className="flex-1 flex">
          <NavTree />
          <Content />
        </div>
        <StatusBar />
        <ContextMenu />
      </div>
    </div>
  );
}
